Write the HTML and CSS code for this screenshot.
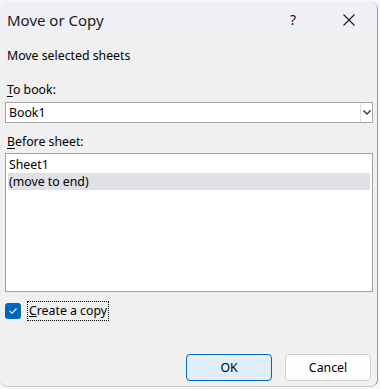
FILE: index.html
```html
<!DOCTYPE html>
<html>
<head>
<meta charset="utf-8">
<link rel="stylesheet" href="styles.css">
</head>
<body>
<div class="dialog">
  <div class="titlebar">
    <span class="title">Move or Copy</span>
    <span class="help">?</span>
    <span class="close">
      <svg width="12" height="12" viewBox="0 0 12 12"><path d="M0.5 0.5 L11.5 11.5 M11.5 0.5 L0.5 11.5" stroke="#1a1a1a" stroke-width="1.1" fill="none"/></svg>
    </span>
  </div>
  <div class="content">
    <div class="heading">Move selected sheets</div>
    <div class="label"><u>T</u>o book:</div>
    <div class="select">
      <span class="select-value">Book1</span>
      <span class="select-arrow">
        <svg width="8" height="5" viewBox="0 0 8 5"><path d="M0.5 0.5 L4 4 L7.5 0.5" stroke="#333" stroke-width="1.4" fill="none"/></svg>
      </span>
    </div>
    <div class="label label2"><u>B</u>efore sheet:</div>
    <div class="listbox">
      <div class="item">Sheet1</div>
      <div class="item selected">(move to end)</div>
    </div>
    <div class="check-row">
      <span class="checkbox">
        <svg width="10" height="8" viewBox="0 0 10 8"><path d="M1.5 4 L4 6.3 L8.5 1.5" stroke="#fff" stroke-width="1.1" fill="none"/></svg>
      </span>
      <span class="check-label"><u>C</u>reate a copy</span>
    </div>
    <div class="buttons">
      <div class="btn btn-ok">OK</div>
      <div class="btn">Cancel</div>
    </div>
  </div>
</div>
</body>
</html>
```

FILE: styles.css
```css
html, body {
  margin: 0;
  padding: 0;
}
body {
  background: #f6f6f6;
  font-family: "Noto Sans", "Open Sans", sans-serif;
  color: #000;
  width: 380px;
  height: 389px;
  overflow: hidden;
}
.dialog {
  margin-top: 2px;
  width: 378px;
  height: 385px;
  background: #f0f0f0;
  border-radius: 7px;
  border-right: 1px solid #9a9a9a;
  border-bottom: 1px solid #c8c8c8;
  box-sizing: border-box;
  overflow: hidden;
  display: flex;
  flex-direction: column;
}
.titlebar {
  height: 36px;
  flex: none;
  background: #eff0f6;
  display: flex;
  align-items: center;
  padding-left: 7px;
}
.title {
  font-size: 15px;
  line-height: 20px;
  flex: 1;
  color: #1a1a1a;
}
.help {
  font-size: 14px;
  line-height: 20px;
  width: 10px;
  margin-right: 43px;
  color: #1a1a1a;
}
.close {
  display: flex;
  margin-right: 22px;
}
.content {
  padding: 0 5px;
  display: flex;
  flex-direction: column;
  font-size: 12.3px;
  line-height: 16px;
}
.heading {
  margin-top: 10px;
  margin-left: 2px;
}
.label {
  margin-top: 18px;
  margin-left: 2px;
  height: 16px;
}
.label u {
  text-underline-offset: 2px;
}
.label2 {
  margin-top: 11px;
}
.select {
  margin-top: 4px;
  height: 21px;
  width: 368px;
  box-sizing: border-box;
  border: 1px solid #a6a6a6;
  background: #fff;
  display: flex;
  align-items: center;
}
.select-value {
  flex: 1;
  padding-left: 3px;
}
.select-arrow {
  width: 11px;
  height: 19px;
  border-left: 1px solid #dcdcdc;
  display: flex;
  align-items: center;
  justify-content: center;
}
.listbox {
  margin-top: 3px;
  height: 139px;
  width: 368px;
  box-sizing: border-box;
  border: 1px solid #a0a0a0;
  background: #fff;
  padding: 2px 2px 0;
}
.item {
  height: 17px;
  line-height: 17px;
  padding-left: 1px;
}
.selected {
  background: #e0e0e6;
}
.check-row {
  margin-top: 9px;
  display: flex;
  align-items: center;
  height: 20px;
}
.checkbox {
  width: 16px;
  height: 16px;
  border-radius: 3px;
  background: #0067c0;
  display: flex;
  align-items: center;
  justify-content: center;
}
.check-label {
  margin-left: 6px;
  height: 18px;
  line-height: 18px;
  padding: 0 1px;
  border: 1px dotted #000;
}
.buttons {
  margin-top: 33px;
  display: flex;
  justify-content: flex-end;
  gap: 13px;
  padding-right: 1px;
}
.btn {
  width: 86px;
  height: 27px;
  box-sizing: border-box;
  border: 1px solid #d0d0d0;
  border-radius: 4px;
  background: #fdfdfd;
  display: flex;
  align-items: center;
  justify-content: center;
}
.btn-ok {
  background: #e0eef9;
  border-color: #0067c0;
}
```
